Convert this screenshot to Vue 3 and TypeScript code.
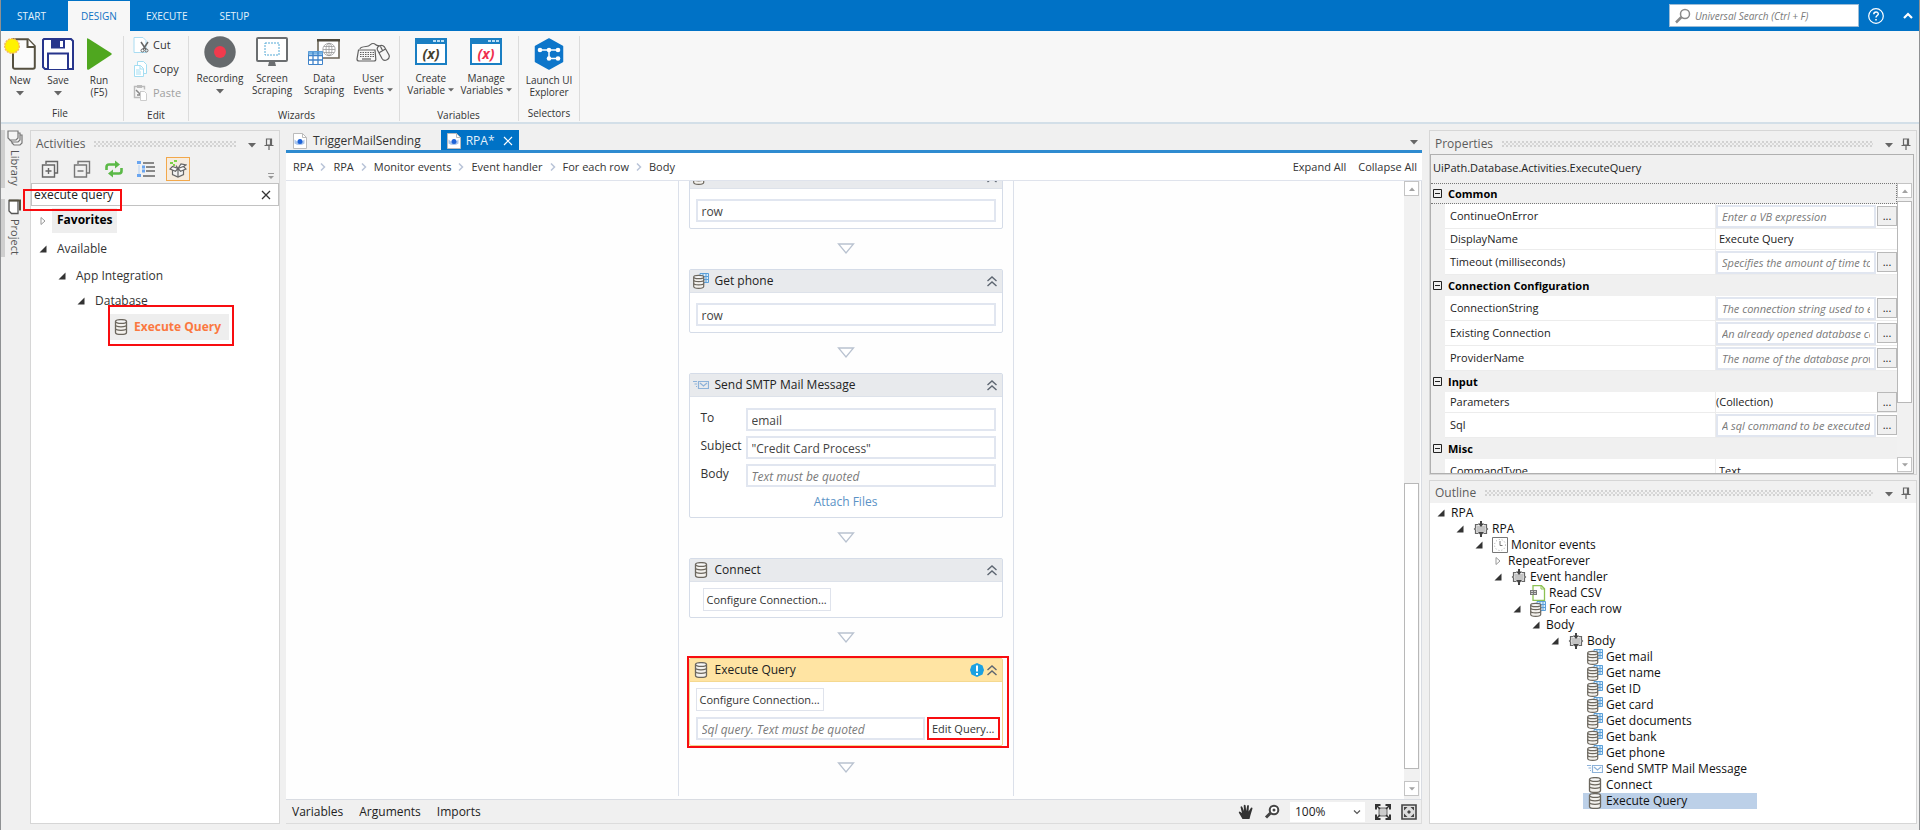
<script setup lang="ts">
import { ref } from 'vue'

interface Tool { label: string[]; icon: string; arrow?: 'below' | 'inline'; w: number; h: number; glyph?: string }
interface Group { name: string; tools: Tool[]; cls: string }
interface Card { title: string; icon: string; kind: 'row' | 'mail' | 'connect' | 'query' }
interface Prop { name: string; value: string; kind: 'expr' | 'text' | 'collection' | 'plain'; size: string }
interface Section { title: string; props: Prop[] }
interface Node { text: string; level: number; icon?: string; state?: 'open' | 'closed'; selected?: boolean }

const search = ref('execute query')
const zoom = ref('100%')

const fileTools: Tool[] = [
  { label: ['New'], icon: 'new', arrow: 'below', w: 32, h: 32 },
  { label: ['Save'], icon: 'save', arrow: 'below', w: 32, h: 32 },
  { label: ['Run', '(F5)'], icon: 'run', w: 32, h: 32 },
]
const groups: Group[] = [
  {
    name: 'Wizards', cls: 'wizards', tools: [
      { label: ['Recording'], icon: 'record', arrow: 'below', w: 32, h: 32 },
      { label: ['Screen', 'Scraping'], icon: 'screen', w: 32, h: 32 },
      { label: ['Data', 'Scraping'], icon: 'data', w: 32, h: 32 },
      { label: ['User', 'Events'], icon: 'events', arrow: 'inline', w: 34, h: 32 },
    ],
  },
  {
    name: 'Variables', cls: 'variables', tools: [
      { label: ['Create', 'Variable'], icon: 'window', arrow: 'inline', w: 32, h: 32, glyph: 'dark' },
      { label: ['Manage', 'Variables'], icon: 'window', arrow: 'inline', w: 32, h: 32, glyph: 'red' },
    ],
  },
  { name: 'Selectors', cls: 'selectors', tools: [{ label: ['Launch UI', 'Explorer'], icon: 'hex', w: 32, h: 32 }] },
]

const crumbs = ['RPA', 'RPA', 'Monitor events', 'Event handler', 'For each row', 'Body']

const cards: Card[] = [
  { title: 'Get bank', icon: 'dbtable', kind: 'row' },
  { title: 'Get phone', icon: 'dbtable', kind: 'row' },
  { title: 'Send SMTP Mail Message', icon: 'mail', kind: 'mail' },
  { title: 'Connect', icon: 'db', kind: 'connect' },
  { title: 'Execute Query', icon: 'db', kind: 'query' },
]

const sections: Section[] = [
  {
    title: 'Common', props: [
      { name: 'ContinueOnError', value: 'Enter a VB expression', kind: 'expr', size: 'tall' },
      { name: 'DisplayName', value: 'Execute Query', kind: 'text', size: 'short' },
      { name: 'Timeout (milliseconds)', value: 'Specifies the amount of time to wait', kind: 'expr', size: 'tall' },
    ],
  },
  {
    title: 'Connection Configuration', props: [
      { name: 'ConnectionString', value: 'The connection string used to establish', kind: 'expr', size: 'tall' },
      { name: 'Existing Connection', value: 'An already opened database connection', kind: 'expr', size: 'tall' },
      { name: 'ProviderName', value: 'The name of the database provider', kind: 'expr', size: 'tall' },
    ],
  },
  {
    title: 'Input', props: [
      { name: 'Parameters', value: '(Collection)', kind: 'collection', size: 'short' },
      { name: 'Sql', value: 'A sql command to be executed', kind: 'expr', size: 'tall' },
    ],
  },
  { title: 'Misc', props: [{ name: 'CommandType', value: 'Text', kind: 'plain', size: 'tall' }] },
]

const nodes: Node[] = [
  { text: 'RPA', level: 0, state: 'open' },
  { text: 'RPA', level: 1, state: 'open', icon: 'seq' },
  { text: 'Monitor events', level: 2, state: 'open', icon: 'clock' },
  { text: 'RepeatForever', level: 3, state: 'closed' },
  { text: 'Event handler', level: 3, state: 'open', icon: 'seq' },
  { text: 'Read CSV', level: 4, icon: 'csv' },
  { text: 'For each row', level: 4, state: 'open', icon: 'dbtable' },
  { text: 'Body', level: 5, state: 'open' },
  { text: 'Body', level: 6, state: 'open', icon: 'seq' },
  ...['Get mail', 'Get name', 'Get ID', 'Get card', 'Get documents', 'Get bank', 'Get phone'].map(
    (text): Node => ({ text, level: 7, icon: 'dbtable' }),
  ),
  { text: 'Send SMTP Mail Message', level: 7, icon: 'mail' },
  { text: 'Connect', level: 7, icon: 'db' },
  { text: 'Execute Query', level: 7, icon: 'db', selected: true },
]
</script>

<template>
  <div class="app">
    <svg class="defs" aria-hidden="true">
      <symbol id="new" viewBox="0 0 32 32"><path d="M9 1.200h15l6.800 7V29a1.800 1.800 0 0 1-1.800 1.800H11A1.800 1.800 0 0 1 9 29z" fill="#fbfbfb" stroke="#555040" stroke-width="2" /><path d="M23.500 1v8H31" fill="#fff" stroke="#555040" stroke-width="2" /><circle cx="8" cy="8" r="7.300" fill="#fff200" stroke="#f5b85c" stroke-width="1.500" stroke-dasharray="2 1" /></symbol>
      <symbol id="save" viewBox="0 0 32 32"><path d="M2 1h27l2 2v28H3l-2-2V2z" fill="#fff" stroke="#27358c" stroke-width="2" /><path d="M9 1h14v9.500H9z" fill="#27358c" /><path d="M18 3h3v6h-3z" fill="#fff" /><path d="M6 31V15.500h20V31" fill="#fff" stroke="#27358c" stroke-width="2" /></symbol>
      <symbol id="run" viewBox="0 0 32 32"><path d="M4 .500q0-.500 2 .500l22 14q1.500 1 0 2L6 31.500q-2 1-2-1z" fill="#4fa71f" /></symbol>
      <symbol id="record" viewBox="0 0 32 32"><circle cx="16" cy="16" r="15.700" fill="#666a6d" /><circle cx="16" cy="16" r="6" fill="#f13a4d" /></symbol>
      <symbol id="screen" viewBox="0 0 32 32"><rect x="1" y="2" width="30" height="23" rx="1" fill="#fff" stroke="#6b6e70" stroke-width="2" /><path d="M13 26h6l1 4H12z" fill="#6b6e70" /><rect x="9" y="7" width="14" height="12" fill="none" stroke="#55a9d6" stroke-dasharray="2 1" /></symbol>
      <symbol id="data" viewBox="0 0 32 32"><path d="M10 4h21v18H10z" fill="#fff" stroke="#6d6658" stroke-width="1.600" /><path d="M9 3h23v2.500H9z" fill="#4d493d" /><g fill="none" stroke="#999" stroke-width=".8"><circle cx="21" cy="13.500" r="6.200" /><ellipse cx="21" cy="13.500" rx="3" ry="6.200" /><path d="M15 13.500h12M21 7v13M16 10.500h10M16 16.500h10" /></g><path d="M.5 15.500h14v13H.5z" fill="#fff" stroke="#3f83c9" /><path d="M.5 15.500h14v3H.5z" fill="#78b6e6" /><path d="M.5 19.500h14M.5 24h14M5 16v12M10 16v12" stroke="#3f83c9" stroke-width="1.300" /></symbol>
      <symbol id="events" viewBox="0 0 34 32"><g fill="none" stroke="#606060" stroke-width="1.200"><path d="M2.500 14l-1.500 9q0 2 2 2h15q2 0 1.800-2L19 14z" /><path d="M4 16.500h14M4 18.500h14M4 20.500h14" stroke-dasharray="1.500 1" /><path d="M6 23h9" /><path d="M4 13q0-2 6-2.500c5-.5 4-3 7-3 3 0 3 3 6 2" /><path d="M21.500 14c-1.500-3.500 4-6.500 7-3l4.500 8c1.500 4-4.500 7.500-7 3.500zM23.500 16.500l6-3.500M26.500 14.500l-2-4" /></g></symbol>
      <symbol id="window" viewBox="0 0 32 32"><path d="M1 3h30v25H1z" fill="#fff" stroke="#1a7fc3" stroke-width="2" /><path d="M0 2h32v6H0z" fill="#1a7fc3" /><path d="M18 4h3v2h-3zM22 4h3v2h-3zM26 4h3v2h-3z" fill="#b8ddf5" /></symbol>
      <symbol id="hex" viewBox="0 0 32 32"><path d="M16 1l13.500 7.500v15L16 31 2.500 23.500v-15z" fill="#0d76ca" stroke="#0d76ca" stroke-width="1.500" stroke-linejoin="round" /><path d="M7 12h18M16 12v8.500h8" fill="none" stroke="#fff" stroke-width="1.500" /><g fill="#fff"><circle cx="7" cy="12" r="2.300" /><circle cx="16" cy="12" r="2.300" /><circle cx="25" cy="12" r="2.300" /><circle cx="16" cy="20.500" r="2.300" /><circle cx="25" cy="20.500" r="2.300" /></g></symbol>
      <symbol id="cut" viewBox="0 0 16 16"><path d="M1 .500h9l3 3v12H1z" fill="#fff" stroke="#aadcf2" /><path d="M8 5l5 7.500M15 5l-5 7.500" stroke="#666" stroke-width="1.500" /><circle cx="9.500" cy="13.500" r="1.500" fill="none" stroke="#666" /><circle cx="13.500" cy="13.500" r="1.500" fill="none" stroke="#666" /></symbol>
      <symbol id="copy" viewBox="0 0 16 16"><path d="M4.500 .500h6l3 3v9h-9z" fill="#fff" stroke="#a5def2" /><path d="M1.500 4.500h6l3 3v8h-9z" fill="#fff" stroke="#a5def2" /><path d="M7 4.500v3.500h3M3 9h4M3 11h5M3 13h5" fill="none" stroke="#a5def2" /></symbol>
      <symbol id="paste" viewBox="0 0 16 16"><path d="M7 12.500H1.500v-11h10v3" fill="none" stroke="#bbb" stroke-width="1.400" /><path d="M4 0h5v3H4z" fill="#bbb" /><path d="M3 5l5 5M8 6v4H4" stroke="#888" fill="none" stroke-width="1.500" /><path d="M7.500 6.500h4l2 2v7h-6z" fill="#fff" stroke="#ccc" /></symbol>
      <symbol id="db" viewBox="0 0 16 16"><path d="M2.500 2.500v11c0 2.600 11 2.600 11 0v-11" fill="#f4f2ee" stroke="#6c675e" stroke-width="1.300" /><ellipse cx="8" cy="2.500" rx="5.500" ry="1.900" fill="#f8f8f8" stroke="#6c675e" stroke-width="1.300" /><path d="M2.500 6c0 2.400 11 2.400 11 0M2.500 9.600c0 2.400 11 2.400 11 0" fill="none" stroke="#6c675e" stroke-width="1.300" /></symbol>
      <symbol id="dbtable" viewBox="0 0 16 16"><path d="M7 .500h8.500v9H7z" fill="#d9ecfb" stroke="#5b9fd8" /><path d="M7 3.500h9M7 6.500h9M10 0v9M13 0v9" stroke="#5b9fd8" /><path d="M.7 4v9.500c0 2.500 10 2.500 10 0V4" fill="#f4f2ee" stroke="#6c675e" stroke-width="1.200" /><ellipse cx="5.700" cy="4" rx="5" ry="1.700" fill="#f8f8f8" stroke="#6c675e" stroke-width="1.200" /><path d="M.7 7c0 2.200 10 2.200 10 0M.7 10.200c0 2.200 10 2.200 10 0" fill="none" stroke="#6c675e" stroke-width="1.200" /></symbol>
      <symbol id="mail" viewBox="0 0 16 16"><path d="M5.500 4.500h10v7h-10zM7 6l3.500 3L14 6M0 4.500h4M1.500 7h2.500M3 9.500h1" fill="none" stroke="#8db2d9" stroke-width="1.200" /></symbol>
      <symbol id="seq" viewBox="0 0 16 16"><path d="M5.500 3.500H2.500v3.500l-1 1 1 1v3.500h3M10.500 3.500h3v3.500l1 1-1 1v3.500h-3" fill="#ddd" stroke="#666" stroke-width="1.200" /><path d="M4 5h8v6H4z" fill="#c4c4c4" /><path d="M8 0v3M8 13v3" stroke="#444" stroke-width="2" /><path d="M5 2.500h6L8 6zM5 11h6l-3 4z" fill="#444" /></symbol>
      <symbol id="clock" viewBox="0 0 16 16"><path d="M.5 .500h15v15H.5z" fill="#fff" stroke="#777" /><circle cx="8" cy="8" r="5.500" fill="none" stroke="#aaa" stroke-dasharray="1 2" /><path d="M8 4v4.500h2.500" fill="none" stroke="#777" /></symbol>
      <symbol id="csv" viewBox="0 0 16 16"><path d="M3 .700h8.500l3 3v11.600H3z" fill="#fff" stroke="#8cc152" stroke-width="1.300" /><path d="M11 1v3h3" fill="none" stroke="#8cc152" /><path d="M0 5h7v5H0z" fill="#777" /><path d="M1 6.500h2M1 8.500h2M4 6.500h2M4 8.500h2" stroke="#ccc" /></symbol>
      <symbol id="pin" viewBox="0 0 10 12"><path d="M2.500 1h5v6h-5zM0.500 7.500h9M5 8v4M6.500 1v6" fill="none" stroke="#666" stroke-width="1.200" /></symbol>
      <symbol id="open" viewBox="0 0 8 8"><path d="M7.500 .500v7H.5z" fill="#333" /></symbol>
      <symbol id="closed" viewBox="0 0 8 8"><path d="M2 .500L6 4 2 7.500z" fill="#fff" stroke="#999" /></symbol>
      <symbol id="chev" viewBox="0 0 12 12"><path d="M1.500 6L6 2l4.500 4M1.500 11L6 7l4.500 4" fill="none" stroke="#5d6671" stroke-width="1.400" /></symbol>
      <symbol id="flow" viewBox="0 0 18 12"><path d="M1.500 1h15L9 10z" fill="#fff" stroke="#b9c2d0" stroke-width="1.300" /></symbol>
      <symbol id="xaml" viewBox="0 0 14 16"><path d="M.5 .500h9l4 4v11H.5z" fill="#fff" stroke="#bbb" /><path d="M9.500 .500v4h4" fill="none" stroke="#bbb" /><path d="M1.500 6.500q5 5 10 0v4q-5 3-10 0z" fill="#a9c6ee" /><circle cx="7" cy="8.500" r="2.500" fill="#1d63d8" /></symbol>
      <symbol id="caret" viewBox="0 0 8 5"><path d="M0 0h8L4 4.500z" fill="#666" /></symbol>
    </svg>

    <header class="topbar">
      <nav class="menu">
        <a href="#" class="m-start">START</a>
        <a href="#" class="m-active">DESIGN</a>
        <a href="#">EXECUTE</a>
        <a href="#">SETUP</a>
      </nav>
      <div class="top-right">
        <label class="universal">
          <svg class="i16" viewBox="0 0 16 16"><circle cx="10" cy="6" r="4.500" fill="none" stroke="#8a8a8a" stroke-width="1.500" /><path d="M6.500 9L1 14.500" stroke="#8a8a8a" stroke-width="2.500" /></svg>
          <input type="text" placeholder="Universal Search (Ctrl + F)" aria-label="Universal Search" />
        </label>
        <button class="bare" aria-label="Help"><svg class="i16" viewBox="0 0 16 16"><circle cx="8" cy="8" r="7.300" fill="none" stroke="#fff" stroke-width="1.200" /><path d="M5.800 6.200c0-3 4.500-2.800 4.500-.3C10.300 7.500 8 7.600 8 9.500M8 11v1.500" fill="none" stroke="#fff" stroke-width="1.500" /></svg></button>
        <button class="bare" aria-label="Collapse ribbon"><svg class="i10" viewBox="0 0 10 10"><path d="M1 7l4-4 4 4" fill="none" stroke="#fff" stroke-width="2.200" /></svg></button>
      </div>
    </header>

    <section class="ribbon">
      <div class="group file">
        <div class="tools">
          <button v-for="t in fileTools" :key="t.icon" class="tool">
            <svg :width="t.w" :height="t.h"><use :href="'#' + t.icon" /></svg>
            <span v-for="l in t.label" :key="l">{{ l }}</span>
            <svg v-if="t.arrow" class="caret below"><use href="#caret" /></svg>
          </button>
        </div>
        <div class="gname">File</div>
      </div>
      <div class="group edit">
        <div class="edit-tools">
          <button><svg class="i16"><use href="#cut" /></svg>Cut</button>
          <button><svg class="i16"><use href="#copy" /></svg>Copy</button>
          <button class="off"><svg class="i16"><use href="#paste" /></svg>Paste</button>
        </div>
        <div class="gname">Edit</div>
      </div>
      <div v-for="g in groups" :key="g.name" class="group" :class="g.cls">
        <div class="tools">
          <button v-for="t in g.tools" :key="t.label[0]" class="tool">
            <svg :width="t.w" :height="t.h"><use :href="'#' + t.icon" /><text v-if="t.glyph" x="16" y="23" text-anchor="middle" class="glyph" :class="t.glyph">(x)</text></svg>
            <span v-for="(l, i) in t.label" :key="l">{{ l }}<svg v-if="t.arrow === 'inline' && i === 1" class="caret inline"><use href="#caret" /></svg></span>
            <svg v-if="t.arrow === 'below'" class="caret below"><use href="#caret" /></svg>
          </button>
        </div>
        <div class="gname">{{ g.name }}</div>
      </div>
    </section>

    <main class="work">
      <aside class="rail">
        <button>
          <svg class="i16" viewBox="0 0 16 16"><g fill="#f4f4f4" stroke="#777" stroke-width="1.200"><path d="M5 5h10v8l-2 2H7l-2-2z" /><path d="M3 3h10v7l-2 2H5l-2-2z" /><path d="M1 1h10v7L9 10H3L1 8z" /></g></svg>
          <span>Library</span>
        </button>
        <button>
          <svg class="i16" viewBox="0 0 16 16"><path d="M2 1.500h9v13H4.500L2 12z" fill="#fff" stroke="#555" stroke-width="1.300" /><path d="M2 .500h12v11h-2V2.500H2z" fill="#555040" /></svg>
          <span>Project</span>
        </button>
      </aside>

      <section class="panel activities">
        <div class="phead">
          <h2>Activities</h2><i class="grip"></i>
          <button class="bare" aria-label="Panel menu"><svg class="caret"><use href="#caret" /></svg></button>
          <button class="bare" aria-label="Pin panel"><svg class="pin"><use href="#pin" /></svg></button>
        </div>
        <div class="tbar">
          <button aria-label="Expand all"><svg viewBox="0 0 18 18"><path d="M5 4V1.500h11.500V13H14M1.500 5h12v12h-12zM7.500 8v6M4.500 11h6" fill="none" stroke="#666" stroke-width="1.400" /></svg></button>
          <button aria-label="Collapse all"><svg viewBox="0 0 18 18"><path d="M5 4V1.500h11.500V13H14M1.500 5h12v12h-12zM4.500 11h6" fill="none" stroke="#777" stroke-width="1.400" /></svg></button>
          <button aria-label="Refresh"><svg viewBox="0 0 18 18"><path d="M1.500 10V7q0-2.500 2.500-2.500H11M16.500 8v3q0 2.500-2.500 2.500H7" fill="none" stroke="#5bb947" stroke-width="2.600" /><path d="M10 .500l5 4-5 4zM8 9.500l-5 4 5 4z" fill="#5bb947" /></svg></button>
          <button aria-label="Group"><svg viewBox="0 0 18 18"><path d="M6 3h11M9 7h9M9 11h9M6 16h12" stroke="#666" stroke-width="1.500" /><path d="M0 1h4v3H0zM5 5.500h3v3H5zM5 9.500h3v3H5zM0 14h4v3H0z" fill="#69a5f0" /><path d="M2 5v9" stroke="#b4d0f2" /></svg></button>
          <button class="on" aria-label="Packages"><svg viewBox="0 0 18 18"><path d="M3.500 8.500v6L9 17l5.500-2.500v-6" fill="#f4f4f4" stroke="#666" stroke-width="1.200" /><path d="M9 8.500L3.500 6.500 1 9l5.500 2.200zM9 8.500l5.500-2L17 9l-5.500 2.200zM9 8.500V17M9 8.500L7 5.500M9 8.500l3-4.500 5 1-2.500 1.500" fill="#fafafa" stroke="#666" stroke-width="1.200" /><path d="M1 2h3v2H1zM5 0h3v2H5zM4 4h2v2H4z" fill="#7bd34a" /></svg></button>
          <svg class="more" viewBox="0 0 8 8"><path d="M1 1.500h6" stroke="#999" /><path d="M1 4h6L4 7z" fill="#999" /></svg>
        </div>
        <div class="find">
          <input v-model="search" type="text" aria-label="Search activities" />
          <button class="bare" aria-label="Clear"><svg class="i10" viewBox="0 0 10 10"><path d="M1 1l8 8M9 1L1 9" stroke="#333" stroke-width="1.300" /></svg></button>
          <i class="mark"></i>
        </div>
        <ul class="atree">
          <li class="l0 fav"><svg class="tw"><use href="#closed" /></svg><b>Favorites</b></li>
          <li class="l0"><svg class="tw"><use href="#open" /></svg>Available</li>
          <li class="l1"><svg class="tw"><use href="#open" /></svg>App Integration</li>
          <li class="l2"><svg class="tw"><use href="#open" /></svg>Database</li>
          <li class="hit"><span><svg class="i16"><use href="#db" /></svg>Execute Query</span><i class="mark"></i></li>
        </ul>
      </section>

      <section class="designer">
        <div class="tabs">
          <button class="tab"><svg class="doc"><use href="#xaml" /></svg>TriggerMailSending</button>
          <button class="tab current"><svg class="doc"><use href="#xaml" /></svg>RPA*<svg class="i10 x" viewBox="0 0 10 10"><path d="M1 1l8 8M9 1L1 9" stroke="#fff" stroke-width="1.200" /></svg></button>
          <svg class="caret last"><use href="#caret" /></svg>
        </div>
        <div class="crumbs">
          <template v-for="(c, i) in crumbs" :key="i">
            <svg v-if="i" class="sep" viewBox="0 0 6 8"><path d="M1 .500L4.500 4 1 7.500" fill="none" stroke="#b9c4d8" stroke-width="1.500" /></svg>
            <a href="#">{{ c }}</a>
          </template>
          <a href="#" class="expand">Expand All</a>
          <a href="#" class="collapse">Collapse All</a>
        </div>
        <div class="view">
          <div class="canvas">
            <div class="column">
              <template v-for="card in cards" :key="card.title">
                <article class="card" :class="card.kind">
                  <header>
                    <svg class="i16"><use :href="'#' + card.icon" /></svg>
                    <h3>{{ card.title }}</h3>
                    <svg v-if="card.kind === 'query'" class="alert" viewBox="0 0 14 14"><path d="M7 0l5.500 2.500L14 7l-1.500 4.500L7 14l-5.500-2.500L0 7l1.500-4.500z" fill="#1ba1e2" /><path d="M7 2.500v6M7 10v2" stroke="#fff" stroke-width="2" /></svg>
                    <button class="bare" aria-label="Collapse"><svg class="chev"><use href="#chev" /></svg></button>
                  </header>
                  <div v-if="card.kind === 'row'" class="cbody"><input class="field" type="text" value="row" :aria-label="card.title + ' row'" /></div>
                  <div v-else-if="card.kind === 'mail'" class="cbody form">
                    <label for="to">To</label><input id="to" class="field" type="text" value="email" />
                    <label for="subject">Subject</label><input id="subject" class="field" type="text" value="&quot;Credit Card Process&quot;" />
                    <label for="mbody">Body</label><input id="mbody" class="field" type="text" placeholder="Text must be quoted" />
                    <a href="#">Attach Files</a>
                  </div>
                  <div v-else-if="card.kind === 'connect'" class="cbody"><button class="btn">Configure Connection...</button></div>
                  <div v-else class="cbody">
                    <button class="btn">Configure Connection...</button>
                    <div class="sql">
                      <input class="field" type="text" placeholder="Sql query. Text must be quoted" aria-label="Sql query" />
                      <button class="btn edit-q">Edit Query...</button>
                    </div>
                  </div>
                  <i v-if="card.kind === 'query'" class="mark"></i>
                </article>
                <svg class="flow"><use href="#flow" /></svg>
              </template>
            </div>
          </div>
          <div class="sbar">
            <button aria-label="Scroll up"><svg class="caret up"><use href="#caret" /></svg></button>
            <div class="track"><i class="thumb"></i></div>
            <button aria-label="Scroll down"><svg class="caret"><use href="#caret" /></svg></button>
          </div>
        </div>
        <footer class="status">
          <a href="#">Variables</a><a href="#">Arguments</a><a href="#">Imports</a>
          <div class="zoombar">
            <button class="bare" aria-label="Pan"><svg class="i16" viewBox="0 0 16 16"><path d="M4.500 15L1 9q-.8-1.500.7-1.500L4 9 2.500 3q.8-1.500 1.800 0L6 7l-.3-5.500q1-1.500 1.900 0L8.200 7l1-5.500q1-1.200 1.700.2L10.600 7.500 13 3.800q1.300-.8 1.500.6L12.500 11l-1 4z" fill="#333" /></svg></button>
            <button class="bare" aria-label="Reset zoom"><svg class="i16" viewBox="0 0 16 16"><circle cx="10" cy="6" r="4.300" fill="#fff" stroke="#444" stroke-width="2" /><circle cx="10" cy="6" r="1.500" fill="#444" /><path d="M6.500 9L2 13.500" stroke="#444" stroke-width="3" /></svg></button>
            <span class="zsel">
              <select v-model="zoom" aria-label="Zoom"><option>100%</option><option>50%</option></select>
              <svg class="i10" viewBox="0 0 10 10"><path d="M2 3.500l3 3 3-3" fill="none" stroke="#555" stroke-width="1.200" /></svg>
            </span>
            <button class="bare" aria-label="Fit to screen"><svg class="i16" viewBox="0 0 16 16"><path d="M4 4h8v8H4z" fill="#ccc" stroke="#666" /><path d="M1 1l4 4M15 1l-4 4M1 15l4-4M15 15l-4-4" stroke="#333" stroke-width="1.500" /><path d="M1 5.500V1h4.500M10.500 1H15v4.500M1 10.500V15h4.500M15 10.500V15h-4.500" fill="none" stroke="#333" stroke-width="2" /></svg></button>
            <button class="bare" aria-label="Overview"><svg class="i16" viewBox="0 0 16 16"><path d="M1 1h14v14H1z" fill="#ddd" stroke="#444" stroke-width="1.600" /><path d="M3 3h3.500L3 6.500zM13 3H9.500L13 6.500zM3 13h3.500L3 9.500zM13 13H9.500L13 9.500zM6 8l2-2 2 2-2 2z" fill="#444" /></svg></button>
          </div>
        </footer>
      </section>

      <div class="right">
        <section class="panel properties">
          <div class="phead">
            <h2>Properties</h2><i class="grip"></i>
            <button class="bare" aria-label="Panel menu"><svg class="caret"><use href="#caret" /></svg></button>
            <button class="bare" aria-label="Pin panel"><svg class="pin"><use href="#pin" /></svg></button>
          </div>
          <div class="pbox">
            <div class="ptype">UiPath.Database.Activities.ExecuteQuery</div>
            <div class="pview">
              <div class="pscroll">
                <table>
                  <colgroup><col class="c-gut" /><col /><col class="c-val" /></colgroup>
                  <tbody v-for="s in sections" :key="s.title">
                    <tr class="sec">
                      <th colspan="3"><svg class="box" viewBox="0 0 9 9"><path d="M.5 .500h8v8h-8zM2 4.500h5" fill="none" stroke="#222" /></svg>{{ s.title }}</th>
                    </tr>
                    <tr v-for="p in s.props" :key="p.name" :class="p.size">
                      <td class="gut"></td>
                      <td class="pname"><label :for="'p-' + p.name">{{ p.name }}</label></td>
                      <td class="pval">
                        <div>
                          <input v-if="p.kind === 'expr'" :id="'p-' + p.name" class="field" type="text" :placeholder="p.value" />
                          <input v-else :id="'p-' + p.name" class="flat" :class="p.kind" type="text" :value="p.value" />
                          <button v-if="p.kind === 'expr' || p.kind === 'collection'">...</button>
                        </div>
                      </td>
                    </tr>
                  </tbody>
                </table>
              </div>
              <div class="sbar">
                <button aria-label="Scroll up"><svg class="caret up"><use href="#caret" /></svg></button>
                <div class="track"><i class="thumb"></i></div>
                <button aria-label="Scroll down"><svg class="caret"><use href="#caret" /></svg></button>
              </div>
            </div>
          </div>
        </section>
        <section class="panel outline">
          <div class="phead">
            <h2>Outline</h2><i class="grip"></i>
            <button class="bare" aria-label="Panel menu"><svg class="caret"><use href="#caret" /></svg></button>
            <button class="bare" aria-label="Pin panel"><svg class="pin"><use href="#pin" /></svg></button>
          </div>
          <ul class="otree">
            <li v-for="(n, i) in nodes" :key="i" :style="{ paddingLeft: 7 + n.level * 19 + 'px' }">
              <svg class="tw"><use v-if="n.state" :href="'#' + n.state" /></svg>
              <span :class="{ selected: n.selected, plain: !n.icon }"><svg v-if="n.icon" class="i16"><use :href="'#' + n.icon" /></svg>{{ n.text }}</span>
            </li>
          </ul>
        </section>
      </div>
    </main>
  </div>
</template>

<style>
html, body { background: #f0f0f0; }
</style>

<style scoped>
* { box-sizing: border-box; }
.app { height: 100vh; min-height: 640px; display: flex; flex-direction: column; overflow: hidden; border: solid #8f9193; border-width: 0 1px; background: #f0f0f0; color: #333; font: 12px/16px "Open Sans", "Noto Sans", sans-serif; }
.defs { position: absolute; width: 0; height: 0; }
svg { display: block; flex: none; }
button, input, select { font: inherit; color: inherit; margin: 0; padding: 0; border: 0; background: none; border-radius: 0; outline: none; }
input { min-width: 0; }
a { color: inherit; text-decoration: none; white-space: nowrap; }
h2, h3, ul { margin: 0; padding: 0; font: inherit; list-style: none; }
.i16 { width: 16px; height: 16px; }
.i10 { width: 10px; height: 10px; }
.caret { width: 8px; height: 5px; }
.caret.up { transform: rotate(180deg); }
.bare { display: grid; place-items: center; }
.mark { position: absolute; border: 2px solid #f80d10; pointer-events: none; }

.topbar { flex: none; height: 31px; background: #0072c6; display: flex; justify-content: space-between; color: #e6f2fb; font-size: 10px; }
.menu { display: flex; }
.menu a { padding: 0 16px; line-height: 32px; }
.menu .m-start { padding: 0 22px 0 16px; }
.menu .m-active { background: #f7f7f7; color: #0e72c4; padding: 0 13px; margin-top: 1px; line-height: 30px; }
.top-right { display: flex; align-items: center; gap: 8px; padding-right: 6px; }
.universal { width: 190px; height: 23px; border: 1px solid #9dbcd6; background: #fff; display: flex; align-items: center; gap: 4px; padding-left: 5px; color: #333; }
.universal input { flex: 1; }
.top-right .bare { width: 18px; height: 18px; }
.top-right .bare:last-child { width: 14px; margin-left: 6px; }
.top-right .bare:last-child svg { margin-left: 4px; }
input::placeholder { font-style: italic; color: #7a7a7a; opacity: 1; }

.ribbon { flex: none; height: 93px; background: #f7f7f7; border-bottom: 2px solid #d3dfe8; display: flex; font-size: 10px; line-height: 12px; padding-top: 5px; }
.group { display: flex; flex-direction: column; justify-content: space-between; border-right: 1px solid #dcdcdc; height: 85px; }
.tools { display: flex; }
.tool { display: flex; flex-direction: column; align-items: center; white-space: nowrap; }
.tool > svg:first-child { margin-bottom: 4px; }
.glyph { font-size: 14px; font-style: italic; font-weight: 700; }
.dark { fill: #45402e; }
.red { fill: #ef304f; }
.gname { text-align: center; }
.caret.below { margin-top: 5px; }
.caret.inline { display: inline-block; width: 6px; height: 4px; margin-left: 3px; vertical-align: 2px; }
.file { width: 123px; }
.file .tools, .selectors .tools { padding-top: 2px; }
.file .gname, .selectors .gname { padding-bottom: 2px; }
.file .gname { padding-right: 4px; }
.file .tool { width: 38px; }
.file .tool:last-child { width: 44px; }
.edit { width: 65px; }
.edit-tools { display: flex; flex-direction: column; gap: 8px; padding: 1px 0 0 9px; }
.edit-tools button { display: flex; align-items: center; gap: 4px; font-size: 11px; }
.off { color: #a0a0a0; }
.wizards { width: 211px; padding-left: 5px; }
.wizards .tool { width: 52px; }
.wizards .tool:last-child { width: 46px; }
.variables { width: 119px; padding: 0 4px 0 3px; }
.variables .tool { width: 56px; }
.selectors { width: 61px; }
.selectors .tools { justify-content: center; }

.work { flex: 1; min-height: 0; display: flex; padding: 6px 2px 6px 0; }
.rail { width: 29px; display: flex; flex-direction: column; gap: 11px; color: #555; font-size: 11px; }
.rail button { width: 23px; display: flex; flex-direction: column; align-items: center; gap: 4px; height: 58px; border-left: 4px solid #cfcfcf; }
.rail span { writing-mode: vertical-rl; line-height: 14px; }
.panel { border: 1px solid #d6d6d6; display: flex; flex-direction: column; }
.phead { flex: none; height: 24px; display: flex; align-items: center; padding: 1px 5px 0; color: #5c5c5c; }
.grip { flex: 1; height: 6px; margin: 0 12px 0 9px; background: radial-gradient(circle at 1px 1px, #d2d2d2 1px, transparent 1px) 0 0 / 4px 4px, radial-gradient(circle at 1px 1px, #dadada 1px, transparent 1px) 2px 2px / 4px 4px; }
.phead .bare + .bare { margin-left: 8px; }
.phead .caret { margin-top: 3px; }
.pin { width: 10px; height: 12px; }

.activities { width: 250px; background: #fff; }
.activities .phead, .tbar { background: #f1f1f1; }
.tbar { flex: none; height: 28px; display: flex; align-items: center; gap: 8px; padding: 0 4px 0 7px; }
.tbar button { width: 24px; height: 24px; display: grid; place-items: center; }
.tbar button svg { width: 18px; height: 18px; }
.tbar .on { border: 1px solid #f2a84b; background: #f6ecdf; }
.more { width: 8px; height: 8px; margin: 14px 0 0 auto; }
.find { flex: none; position: relative; height: 23px; border: 1px solid #c2c2c2; display: flex; }
.find input { flex: 1; padding: 0 0 0 2px; color: #222; }
.find .bare { width: 24px; }
.find .mark { left: -9px; top: 5px; width: 99px; height: 22px; }
.atree li { display: flex; align-items: center; height: 27px; gap: 10px; color: #333; }
.tw { width: 8px; height: 8px; }
.atree .l0 { padding-left: 8px; }
.atree .fav { height: 29px; gap: 5px; }
.atree b { background: #eee; color: #000; padding: 4px 5px; height: 25px; }
.atree .l1 { padding-left: 27px; }
.atree .l2 { padding-left: 46px; height: 24px; }
.atree .hit { position: relative; padding-left: 79px; height: 28px; }
.hit span { display: flex; align-items: center; gap: 5px; height: 26px; padding: 0 8px 0 3px; background: #eee; color: #fb7840; font-weight: 700; }
.hit .mark { left: 77px; top: -8px; width: 126px; height: 41px; }

.designer { flex: 1; min-width: 0; margin-left: 6px; display: flex; flex-direction: column; }
.tabs { flex: none; display: flex; height: 23px; border-bottom: 3px solid #2e8bd0; }
.tab { display: flex; align-items: center; gap: 6px; padding: 2px 20px 0 7px; white-space: nowrap; }
.doc { width: 14px; height: 16px; }
.current { background: #0072c6; color: #e4f1fb; padding: 2px 6px 0; gap: 5px; }
.x { margin-left: 3px; }
.last { margin: 10px 4px 0 auto; }
.crumbs { flex: none; height: 28px; display: flex; align-items: center; padding: 0 5px 0 7px; background: #fff; border-bottom: 1px solid #dfe3ec; font-size: 11px; }
.sep { width: 6px; height: 8px; margin: 0 7px; }
.expand { margin-left: auto; }
.collapse { margin-left: 12px; }
.view { flex: 1; min-height: 0; display: flex; border: solid #d9dce2; border-width: 0 1px 1px 0; background: #fefefe; }
.canvas { flex: 1; min-width: 0; overflow: hidden; display: flex; flex-direction: column; align-items: center; justify-content: flex-end; padding: 0 0 3px 1px; }
.column { width: 336px; padding: 0 10px; border: solid #dbe0ea; border-width: 0 1px; display: flex; flex-direction: column; align-items: center; }
.flow { width: 18px; height: 12px; margin: 14px 0; }
.flow:last-child { margin: 16px 0 22px; }
.card { position: relative; width: 100%; border: 1px solid #d5dce8; border-radius: 2px; background: #fff; }
.card header { height: 23px; display: flex; align-items: center; background: #e8eaed; border-bottom: 1px solid #dde2ea; padding: 0 4px 0 3px; color: #222; }
.card h3 { flex: 1; margin-left: 6px; }
.chev { width: 12px; height: 12px; }
.alert { width: 14px; height: 14px; margin-right: 2px; }
.cbody { padding: 10px 6px 6px; }
.field { display: block; width: 100%; height: 23px; border: 2px solid #e1e6f0; background: #fff; padding: 1px 4px 0; color: #444; }
.form { display: grid; grid-template-columns: 50px 1fr; gap: 5px 0; padding: 11px 6px 7px; }
.form label { padding-left: 5px; line-height: 20px; color: #333; }
.form a { grid-column: 1 / 3; justify-self: center; color: #5b92c6; line-height: 16px; margin-top: 2px; }
.btn { display: block; height: 23px; border: 1px solid #dfe3ec; padding: 0 3px; background: #fff; white-space: nowrap; color: #333; font-size: 11px; }
.connect .cbody { padding: 6px 13px 6px; }
.query { border-color: #f0d68e; }
.query header { background: #ffe4a3; border-color: #f5d990; }
.query .cbody { padding: 6px 2px 5px 6px; }
.sql { display: flex; gap: 2px; margin-top: 6px; }
.sql .field { flex: 1; width: auto; }
.edit-q { border: 2px solid #f80d10; }
.query .mark { left: -3px; top: -3px; right: -7px; bottom: -3px; }

.sbar { flex: none; width: 16px; display: flex; flex-direction: column; background: #f1f1f1; padding-bottom: 3px; }
.sbar button { height: 15px; width: 15px; border: 1px solid #c4c4c4; background: #fff; display: grid; place-items: center; }
.sbar .caret { width: 6px; height: 4px; opacity: .6; }
.track { flex: 1; display: flex; flex-direction: column; justify-content: flex-end; padding-bottom: 12px; }
.thumb { height: 50%; width: 15px; border: 1px solid #b8b8b8; background: #fff; }
.view .sbar { margin-right: 1px; }
.status { flex: none; height: 24px; display: flex; align-items: center; gap: 16px; padding: 0 4px 0 6px; border: solid #dcdcdc; border-width: 0 1px 1px 0; color: #222; }
.zoombar { margin-left: auto; display: flex; align-items: center; gap: 10px; }
.zsel { position: relative; width: 75px; height: 20px; background: #fff; }
.zsel select { width: 100%; height: 20px; appearance: none; padding-left: 5px; }
.zsel svg { position: absolute; right: 3px; top: 5px; pointer-events: none; }

.right { flex: none; width: 488px; margin-left: 7px; display: flex; flex-direction: column; gap: 5px; }
.properties { flex: 0 1 345px; min-height: 0; }
.properties .phead { height: 23px; padding-top: 2px; }
.pbox { flex: 1; min-height: 0; border: 1px solid #b0b0b0; margin-right: 2px; display: flex; flex-direction: column; font-size: 11px; }
.ptype { flex: none; height: 28px; line-height: 26px; padding-left: 2px; color: #222; }
.pview { flex: 1; min-height: 0; display: flex; }
.pscroll { flex: 1; min-width: 0; overflow: hidden; }
table { width: 100%; border-collapse: separate; border-spacing: 0; table-layout: fixed; }
.c-gut { width: 14px; }
.c-val { width: 182px; }
th, td { padding: 0; text-align: left; }
.sec th { height: 21px; color: #000; background: #f0f0f0; }
.box { display: inline-block; width: 9px; height: 9px; margin: 0 6px 0 2px; }
tbody:first-of-type .sec th { border: 1px dotted #777; border-width: 1px 1px 1px 0; }
.pname, .pval { background: #fff; border-bottom: 1px solid #ececec; color: #222; }
.pname { padding-left: 5px; }
.pval { border-left: 1px solid #ececec; }
.tall td { height: 25px; }
.short td { height: 21px; }
.pval div { display: flex; align-items: center; gap: 1px; }
.pval .field { width: 160px; }
.pval button { width: 20px; height: 20px; border: 1px solid #b9b9b9; background: #f0f0f0; line-height: 14px; color: #222; }
.flat { width: 160px; padding-left: 3px; }
.flat.collection { padding-left: 0; }
.pview .sbar { padding-bottom: 1px; }
.pview .track { justify-content: flex-start; padding: 3px 0 0; }
.pview .thumb { height: 79%; }

.outline { flex: 1; min-height: 0; background: #fff; }
.outline .phead { background: #f1f1f1; height: 22px; }
.otree { padding-top: 2px; color: #111; }
.otree li { display: flex; align-items: center; height: 16px; }
.otree span { display: flex; align-items: center; gap: 3px; padding-left: 9px; white-space: nowrap; }
.otree .plain { padding-left: 6px; }
.otree .selected { background: #bcd0e8; width: 174px; padding-left: 4px; margin-left: 5px; }
</style>
